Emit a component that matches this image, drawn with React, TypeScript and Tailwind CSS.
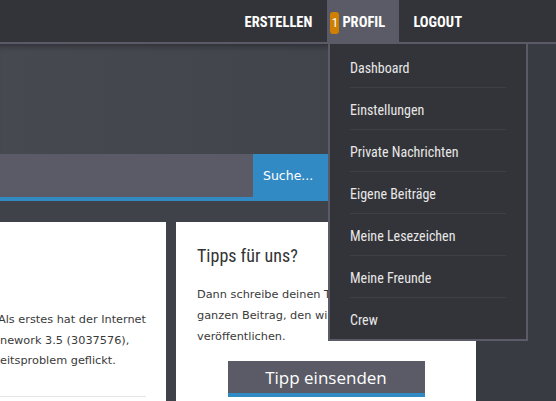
const narrow = { fontFamily: '"Roboto Condensed", "Liberation Sans Narrow", Roboto, sans-serif' };

const menuItems = [
  'Dashboard',
  'Einstellungen',
  'Private Nachrichten',
  'Eigene Beiträge',
  'Meine Lesezeichen',
  'Meine Freunde',
  'Crew',
];

export default function App() {
  return (
    <div className="relative w-[556px] h-[401px] overflow-hidden bg-[#393b43] font-['DejaVu_Sans',sans-serif]">
      {/* Kopfzeile */}
      <header className="h-[44px] bg-[#333439] border-b-2 border-[#5a5b66] flex justify-end pr-[94px]" style={narrow}>
        <a className="h-full flex items-center pt-[4px] pr-[15px] text-white font-bold text-[14.5px] uppercase">Erstellen</a>
        <a className="h-full w-[72px] bg-[#5a5b66] flex items-center pt-[4px] pl-[3px] text-white font-bold text-[14.5px] uppercase">
          <span className="w-[9px] h-[22px] rounded-[3px] bg-[#d08000] flex items-center justify-center text-[13px] font-normal mr-[3px]">1</span>
          Profil
        </a>
        <a className="h-full flex items-center pt-[4px] pl-[14px] text-white font-bold text-[14.5px] uppercase">Logout</a>
      </header>

      <div className="flex">
        <main className="w-[476px] bg-[#40424a]">
          {/* Hero */}
          <div className="h-[110px] bg-gradient-to-r from-[#474951] to-[#40424a] shadow-[inset_0_7px_6px_-5px_rgba(0,0,0,0.35)]" />

          {/* Suche */}
          <div className="flex h-[47px] border-b-4 border-[#318ac4]">
            <div className="w-[253px] bg-[#5a5b66]" />
            <button className="flex-1 bg-[#318ac4] text-white text-[12.5px] text-left pl-[10px] pt-[1px]">Suche...</button>
          </div>

          <div className="flex gap-[10px] pt-[21px] h-[200px]">
            {/* linke Karte */}
            <div className="w-[166px] h-[179px] bg-white overflow-hidden pr-[20px]">
              <div className="pt-[88px] text-[11.3px] leading-[20.5px] text-[#3a3a3a] whitespace-nowrap -ml-[2px]">
                <div>Als erstes hat der Internet</div>
                <div className="ml-[2px]">nework 3.5 (3037576),</div>
                <div className="ml-[2px]">eitsproblem geflickt.</div>
              </div>
              <div className="mt-[24px] border-t border-[#e6e6e6]" />
            </div>

            {/* rechte Karte */}
            <div className="w-[300px] h-[179px] bg-white px-[21px] pt-[21px]">
              <h2 className="text-[18px] text-[#333] leading-[26px]" style={narrow}>Tipps für uns?</h2>
              <p className="mt-[15px] text-[11.3px] leading-[21px] text-[#3a3a3a] whitespace-nowrap">
                Dann schreibe deinen Tipp oder einen<br />
                ganzen Beitrag, den wir gerne<br />
                veröffentlichen.
              </p>
              <div className="flex justify-center mt-[14px]">
                <button className="w-[197px] h-[36px] bg-[#5a5b66] border-b-4 border-[#318ac4] text-white text-[17px] font-['Open_Sans',sans-serif] leading-none">
                  Tipp einsenden
                </button>
              </div>
            </div>
          </div>
        </main>
        <div className="flex-1" />
      </div>

      {/* Profil-Dropdown */}
      <div className="absolute left-[328px] top-[42px] w-[200px] h-[299px] bg-[#333439] border-2 border-[#5a5b66] pt-[2px] px-[20px]" style={narrow}>
        {menuItems.map((item, i) => (
          <div
            key={item}
            className={`h-[42px] flex items-center pt-[3px] text-[14px] text-[#e8e8e8] ${i < menuItems.length - 1 ? 'border-b border-[#3f4046]' : ''}`}
          >
            {item}
          </div>
        ))}
      </div>
    </div>
  );
}
